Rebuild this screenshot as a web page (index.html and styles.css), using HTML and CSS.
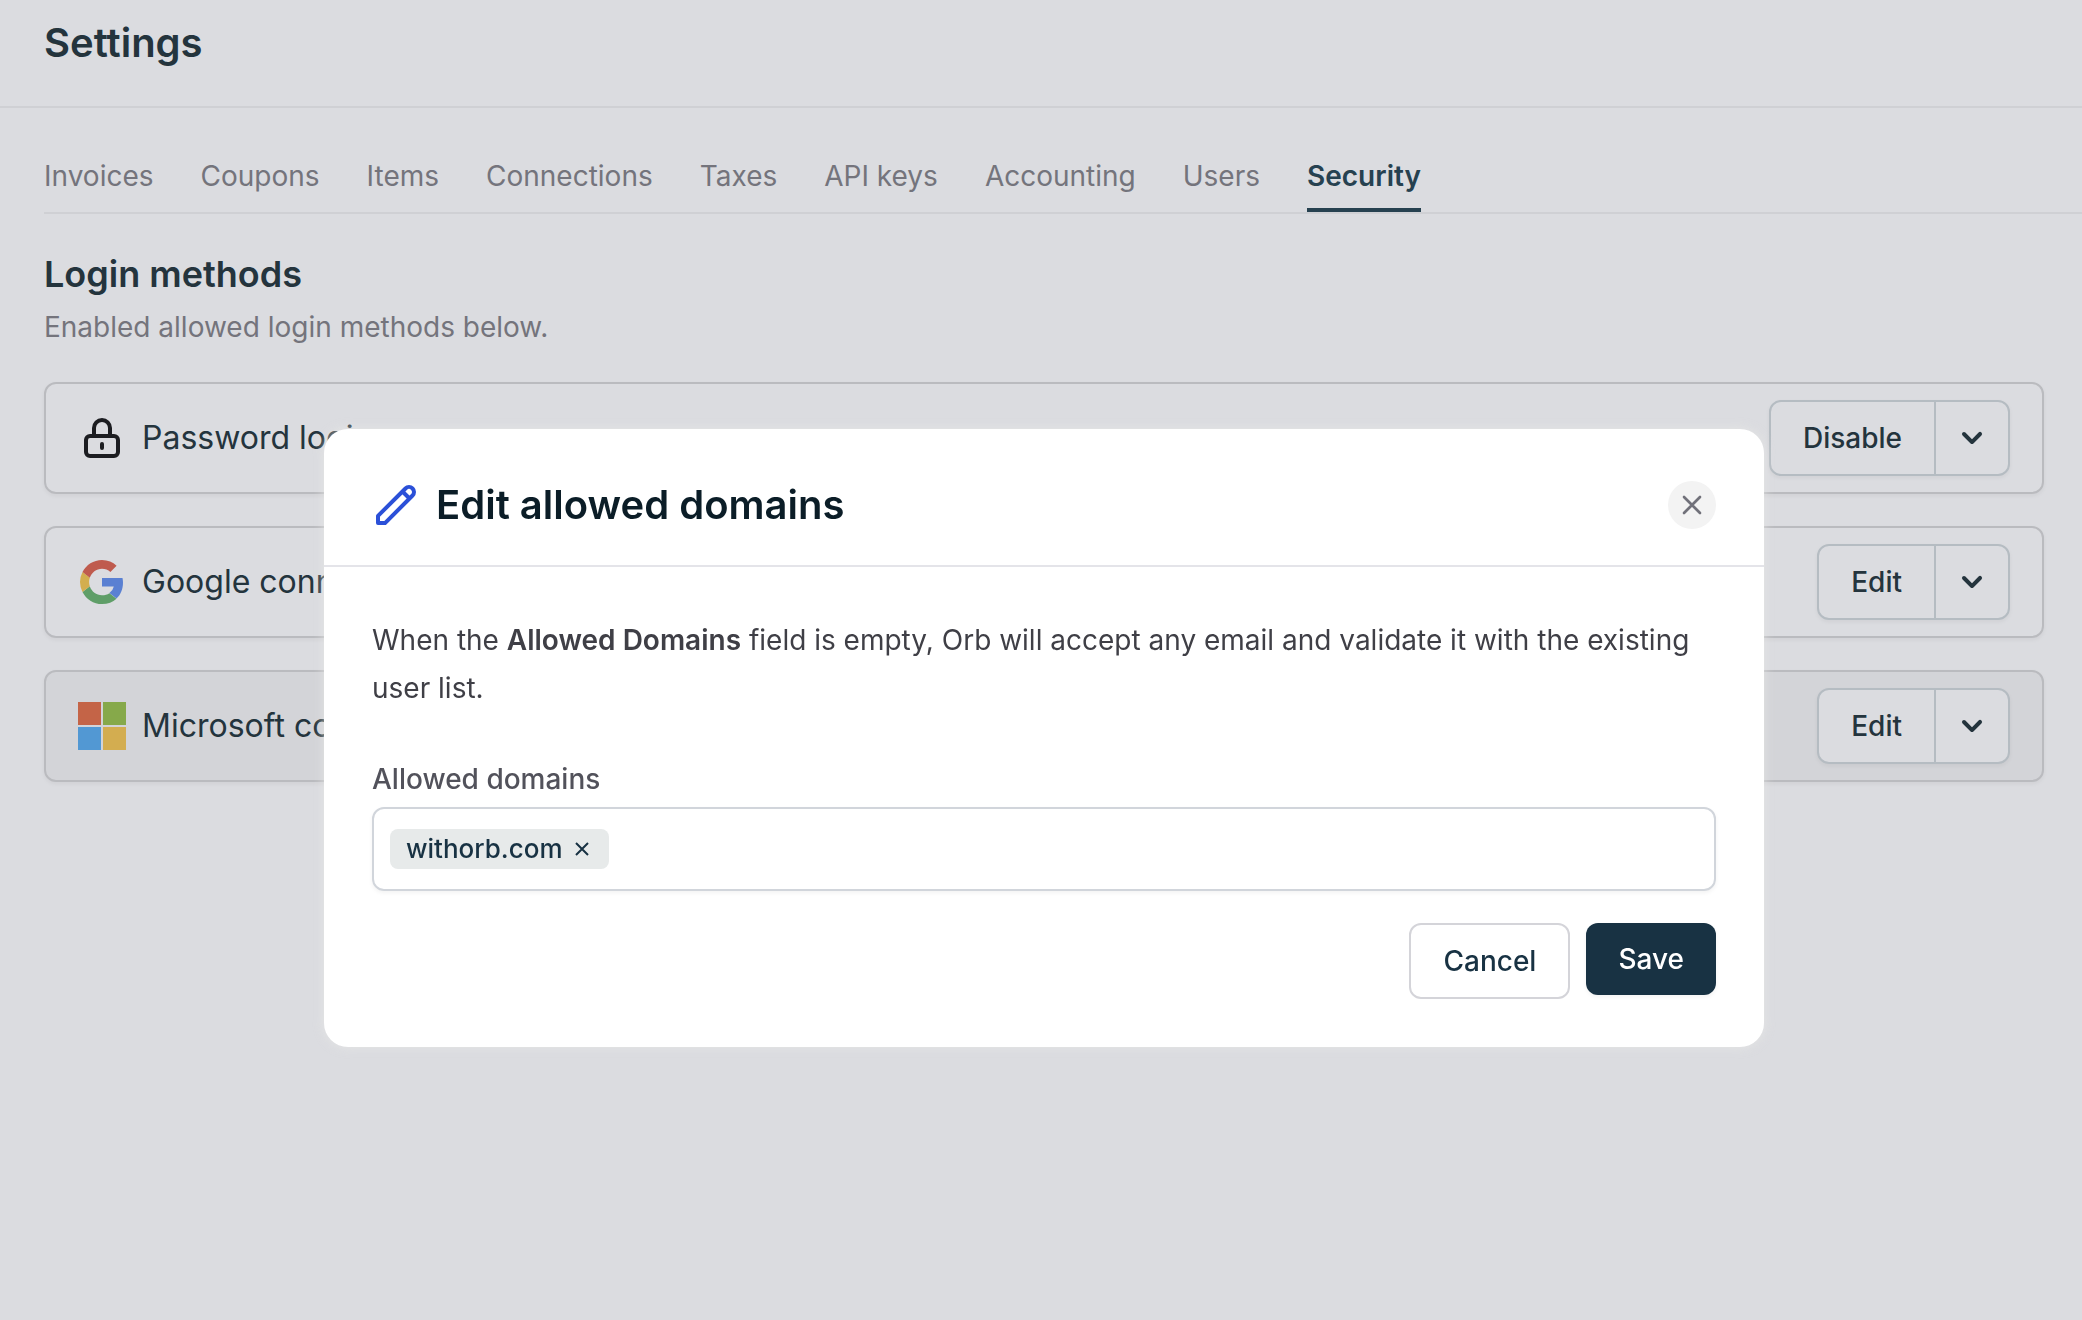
FILE: index.html
```html
<!DOCTYPE html>
<html lang="en">
<head>
  <meta charset="UTF-8">
  <meta name="viewport" content="width=device-width, initial-scale=1.0">
  <title>Settings</title>
  <link rel="stylesheet" href="styles.css">
</head>
<body>
  <header class="page-header">
    <h1>Settings</h1>
  </header>

  <nav class="tabs">
    <a href="#invoices">Invoices</a>
    <a href="#coupons">Coupons</a>
    <a href="#items">Items</a>
    <a href="#connections">Connections</a>
    <a href="#taxes">Taxes</a>
    <a href="#api-keys">API keys</a>
    <a href="#accounting">Accounting</a>
    <a href="#users">Users</a>
    <a href="#security" class="active">Security</a>
  </nav>

  <main class="content">
    <h2>Login methods</h2>
    <p class="description">Enabled allowed login methods below.</p>

    <div class="methods">
      <div class="method">
        <svg class="icon" viewBox="0 0 48 48" fill="none" stroke="#1c1d21" stroke-width="4" stroke-linecap="round">
          <rect x="8" y="22" width="32" height="20" rx="4"/>
          <path d="M16 22v-8a8 8 0 0 1 16 0v8M24 30v4"/>
        </svg>
        <span class="method-name">Password login</span>
        <div class="button-group">
          <button type="button">Disable</button>
          <button type="button" class="toggle" aria-label="More options">
            <svg viewBox="0 0 20 20" fill="currentColor"><path d="M5.293 7.293a1 1 0 011.414 0L10 10.586l3.293-3.293a1 1 0 111.414 1.414l-4 4a1 1 0 01-1.414 0l-4-4a1 1 0 010-1.414z"/></svg>
          </button>
        </div>
      </div>

      <div class="method">
        <svg class="icon" viewBox="0 0 48 48">
          <path fill="#5a80d2" d="M44.5 20H24v8.500h11.800a10.500 10.500 0 0 1-4.400 6.600l7.100 5.500C42.700 36.800 45 31.100 45 24.500c0-1.600-.2-3.100-.5-4.500z"/>
          <path fill="#5f9e68" d="M24 46c5.900 0 10.900-1.900 14.500-5.300l-7.100-5.500c-2 1.300-4.500 2.100-7.400 2.100-5.700 0-10.500-3.800-12.200-9L4.500 33.900C8.100 41.100 15.500 46 24 46z"/>
          <path fill="#d3ae4e" d="M11.800 28.300a13.200 13.200 0 0 1 0-8.500l-7.300-5.700a22 22 0 0 0 0 19.800z"/>
          <path fill="#bf5b4e" d="M24 10.700c3.200 0 6.100 1.100 8.400 3.300l6.200-6.200C34.800 4.200 29.900 2 24 2 15.500 2 8.100 6.900 4.500 14.100l7.300 5.700c1.700-5.200 6.500-9.100 12.200-9.100z"/>
        </svg>
        <span class="method-name">Google connection</span>
        <div class="button-group">
          <button type="button">Edit</button>
          <button type="button" class="toggle" aria-label="More options">
            <svg viewBox="0 0 20 20" fill="currentColor"><path d="M5.293 7.293a1 1 0 011.414 0L10 10.586l3.293-3.293a1 1 0 111.414 1.414l-4 4a1 1 0 01-1.414 0l-4-4a1 1 0 010-1.414z"/></svg>
          </button>
        </div>
      </div>

      <div class="method inactive">
        <svg class="icon" viewBox="0 0 48 48">
          <rect width="23" height="23" fill="#c46447"/>
          <rect x="25" width="23" height="23" fill="#86a94a"/>
          <rect y="25" width="23" height="23" fill="#5298d3"/>
          <rect x="25" y="25" width="23" height="23" fill="#d3ad50"/>
        </svg>
        <span class="method-name">Microsoft connection</span>
        <div class="button-group">
          <button type="button">Edit</button>
          <button type="button" class="toggle" aria-label="More options">
            <svg viewBox="0 0 20 20" fill="currentColor"><path d="M5.293 7.293a1 1 0 011.414 0L10 10.586l3.293-3.293a1 1 0 111.414 1.414l-4 4a1 1 0 01-1.414 0l-4-4a1 1 0 010-1.414z"/></svg>
          </button>
        </div>
      </div>
    </div>
  </main>

  <!-- Edit domains dialog -->
  <div class="overlay">
    <div class="modal" role="dialog" aria-labelledby="modalTitle">
      <div class="modal-header">
        <svg class="icon" viewBox="0 0 24 24" fill="none" stroke="#2b50d8" stroke-width="2" stroke-linejoin="round"><path d="M15.232 5.232l3.536 3.536m-2.036-5.036a2.5 2.5 0 113.536 3.536L6.500 21.036H3v-3.572L16.732 3.732z"/></svg>
        <h2 id="modalTitle">Edit allowed domains</h2>
        <button type="button" class="close" aria-label="Close">
          <svg viewBox="0 0 24 24" fill="none" stroke="currentColor" stroke-width="2" stroke-linecap="round"><path d="M6 18L18 6M6 6l12 12"/></svg>
        </button>
      </div>
      <form class="modal-body">
        <p>When the <strong>Allowed Domains</strong> field is empty, Orb will accept any email and validate it with the existing user list.</p>
        <label for="domains">Allowed domains</label>
        <div class="tag-field">
          <span class="tag">withorb.com
            <button type="button" aria-label="Remove withorb.com">
              <svg viewBox="0 0 14 14" fill="none" stroke="currentColor" stroke-width="2"><path d="M1 1l12 12M13 1L1 13"/></svg>
            </button>
          </span>
          <input type="text" id="domains">
        </div>
        <div class="actions">
          <button type="button" class="cancel">Cancel</button>
          <button type="submit" class="save">Save</button>
        </div>
      </form>
    </div>
  </div>
</body>
</html>
```

FILE: styles.css
```css
* {
  box-sizing: border-box;
}
body {
  margin: 0;
  min-height: 100vh;
  font-family: Inter, sans-serif;
  font-size: 28px;
  line-height: 40px;
  color: #24343d;
  background-color: #dbdce0;
}
h1, h2, p {
  margin: 0;
}
button, input {
  font: inherit;
  color: inherit;
}
button {
  margin: 0;
  padding: 0;
  border: none;
  background: none;
  cursor: pointer;
}
svg {
  display: block;
  flex: none;
}
.icon {
  width: 48px;
  height: 48px;
}

/* Page */
.page-header {
  padding: 19px 44px 39px;
  border-bottom: 2px solid #cfd0d4;
}
.page-header h1 {
  font-size: 40px;
  line-height: 48px;
  font-weight: 600;
}
.tabs {
  display: flex;
  gap: 47px;
  margin-left: 44px;
  padding-top: 48px;
  border-bottom: 2px solid #cfd0d4;
}
.tabs a {
  padding-bottom: 12px;
  border-bottom: 4px solid transparent;
  color: #74747c;
  text-decoration: none;
}
.tabs .active {
  color: #264150;
  border-color: #264150;
  font-weight: 600;
}
.content {
  padding: 36px 38px 36px 44px;
}
.content h2 {
  font-size: 36px;
  line-height: 48px;
  font-weight: 600;
}
.description {
  margin-top: 9px;
  color: #74747c;
}
.methods {
  display: flex;
  flex-direction: column;
  gap: 32px;
  margin-top: 35px;
}
.method {
  display: flex;
  align-items: center;
  gap: 16px;
  padding: 16px 32px;
  border: 2px solid #babbbf;
  border-radius: 12px;
  box-shadow: 0 2px 4px rgba(0, 0, 0, 0.05);
}
.method.inactive {
  background-color: #d3d4d8;
}
.method-name {
  flex: 1;
  font-size: 32px;
}
.button-group {
  display: flex;
  border: 2px solid #b5bcc2;
  border-radius: 12px;
  background-color: #dbdce0;
  box-shadow: 0 2px 4px rgba(0, 0, 0, 0.05);
}
.button-group button {
  padding: 16px 32px;
  font-weight: 500;
}
.button-group .toggle {
  padding: 16px;
  border-left: 2px solid #b5bcc2;
}
.toggle svg {
  width: 40px;
  height: 40px;
}

/* Modal */
.overlay {
  position: fixed;
  inset: 0;
  display: flex;
  justify-content: center;
  align-items: flex-start;
  padding: 429px 38px 0 44px;
}
.modal {
  width: 100%;
  max-width: 1440px;
  border-radius: 24px;
  background-color: #fff;
  box-shadow: 0 0 12px rgba(232, 233, 231, 0.8);
}
.modal-header {
  display: flex;
  align-items: center;
  gap: 16px;
  padding: 52px 48px 36px;
  border-bottom: 2px solid #e4e4e9;
}
.modal-header h2 {
  flex: 1;
  font-size: 40px;
  line-height: 48px;
  font-weight: 600;
  color: #0b1d27;
}
.close {
  display: flex;
  justify-content: center;
  align-items: center;
  width: 48px;
  height: 48px;
  border-radius: 50%;
  background-color: #f3f3f3;
  color: #71717a;
}
.close svg {
  width: 32px;
  height: 32px;
}
.modal-body {
  padding: 49px 48px 48px;
  color: #3f3f46;
}
.modal-body p {
  line-height: 48px;
}
.modal-body strong {
  font-weight: 600;
}
.modal-body label {
  display: block;
  margin: 47px 0 8px;
  font-weight: 500;
  color: #52525b;
}
.tag-field {
  display: flex;
  align-items: center;
  gap: 16px;
  padding: 20px 16px;
  border: 2px solid #d1d5db;
  border-radius: 12px;
  box-shadow: 0 2px 4px rgba(0, 0, 0, 0.05);
}
.tag {
  display: flex;
  align-items: center;
  gap: 12px;
  padding: 0 20px 0 16px;
  border-radius: 8px;
  background-color: #e7eaea;
  color: #183243;
  font-size: 26px;
  font-weight: 500;
}
.tag svg {
  width: 14px;
  height: 14px;
}
.tag-field input {
  flex: 1;
  min-width: 0;
  height: 40px;
  padding: 0;
  border: none;
  outline: none;
  background: none;
}
.actions {
  display: flex;
  justify-content: flex-end;
  align-items: flex-start;
  gap: 16px;
  margin-top: 32px;
}
.actions button {
  padding: 16px 32px;
  border-radius: 12px;
  font-weight: 500;
}
.actions .cancel {
  border: 2px solid #d4d4d9;
  color: #183243;
}
.actions .save {
  background-color: #183243;
  color: #fff;
  box-shadow: 0 2px 4px rgba(0, 0, 0, 0.05);
}
```
